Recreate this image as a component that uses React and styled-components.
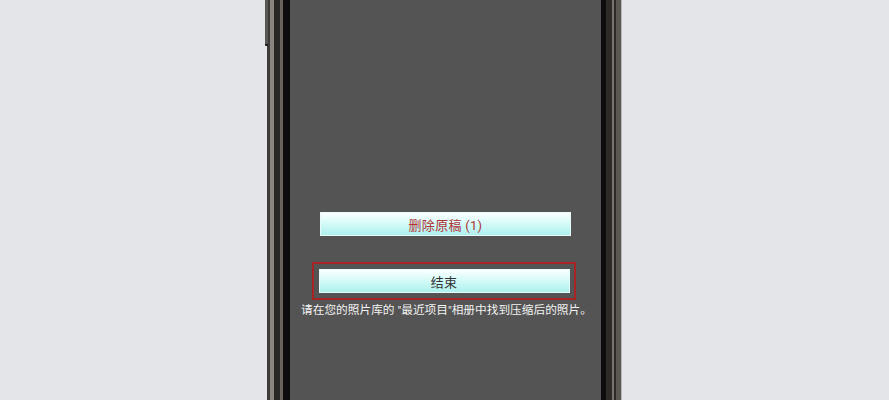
import React from "react";
import styled, { createGlobalStyle } from "styled-components";

const Global = createGlobalStyle`
  html, body { margin: 0; padding: 0; }
  body {
    background: #e4e5e9;
    font-family: Roboto, "Noto Sans CJK SC", "Noto Sans", sans-serif;
    overflow: hidden;
  }
`;

const Page = styled.div`
  height: 400px;
  display: flex;
  justify-content: center;
  overflow: hidden;
`;

const Phone = styled.div`
  position: relative;
  width: 355px;
  height: 400px;
  display: flex;
  background: linear-gradient(
    to right,
    #3e3c3a 0px, #3e3c3a 3px,
    #8a857e 3px, #8a857e 7px,
    #2a2826 7px, #2a2826 13px,
    #68635d 13px, #68635d 16px,
    #0d0b0b 16px, #0d0b0b 23px,
    transparent 23px, transparent 334px,
    #0d0b0b 334px, #0d0b0b 339px,
    #2e2a28 339px, #2e2a28 345px,
    #7a7570 345px, #7a7570 347px,
    #2c2a28 347px, #2c2a28 349px,
    #5a5652 349px, #5a5652 354px,
    #b8b8bc 354px, #b8b8bc 355px
  );
`;

const SideKey = styled.div`
  position: absolute;
  left: -2px;
  top: 0;
  width: 3px;
  height: 44px;
  background: #5a5854;
  border-bottom: 2px solid #1a1a1a;
  border-radius: 0 0 1px 1px;
`;

const Screen = styled.div`
  margin-left: 23px;
  width: 311px;
  height: 400px;
  background: #545454;
  display: flex;
  flex-direction: column;
  align-items: center;
  padding-top: 212px;
  box-sizing: border-box;
`;

const ActionButton = styled.div`
  width: 251px;
  height: 24px;
  box-sizing: border-box;
  border: 1px solid #e6fbfa;
  background: linear-gradient(to bottom, #fbffff 0%, #d6fbf8 45%, #aef1ee 100%);
  display: flex;
  align-items: center;
  justify-content: center;
  font-size: 13px;
  color: ${(p) => p.$color || "#333333"};
  letter-spacing: 0.3px;
`;

const Highlight = styled.div`
  margin-top: 26px;
  margin-left: -3px;
  width: 264px;
  height: 38px;
  box-sizing: border-box;
  border: 2px solid #a82424;
  display: flex;
  align-items: center;
  justify-content: center;
`;

const Caption = styled.div`
  margin-top: 3px;
  margin-left: 2px;
  font-size: 11.7px;
  line-height: 14px;
  color: #f2f2f2;
  white-space: nowrap;
`;

export default function App() {
  return (
    <>
      <Global />
      <Page>
        <Phone>
          <SideKey />
          <Screen>
            <ActionButton $color="#b03434">删除原稿 (1)</ActionButton>
            <Highlight>
              <ActionButton>结束</ActionButton>
            </Highlight>
            <Caption>请在您的照片库的 "最近项目"相册中找到压缩后的照片。</Caption>
          </Screen>
        </Phone>
      </Page>
    </>
  );
}
